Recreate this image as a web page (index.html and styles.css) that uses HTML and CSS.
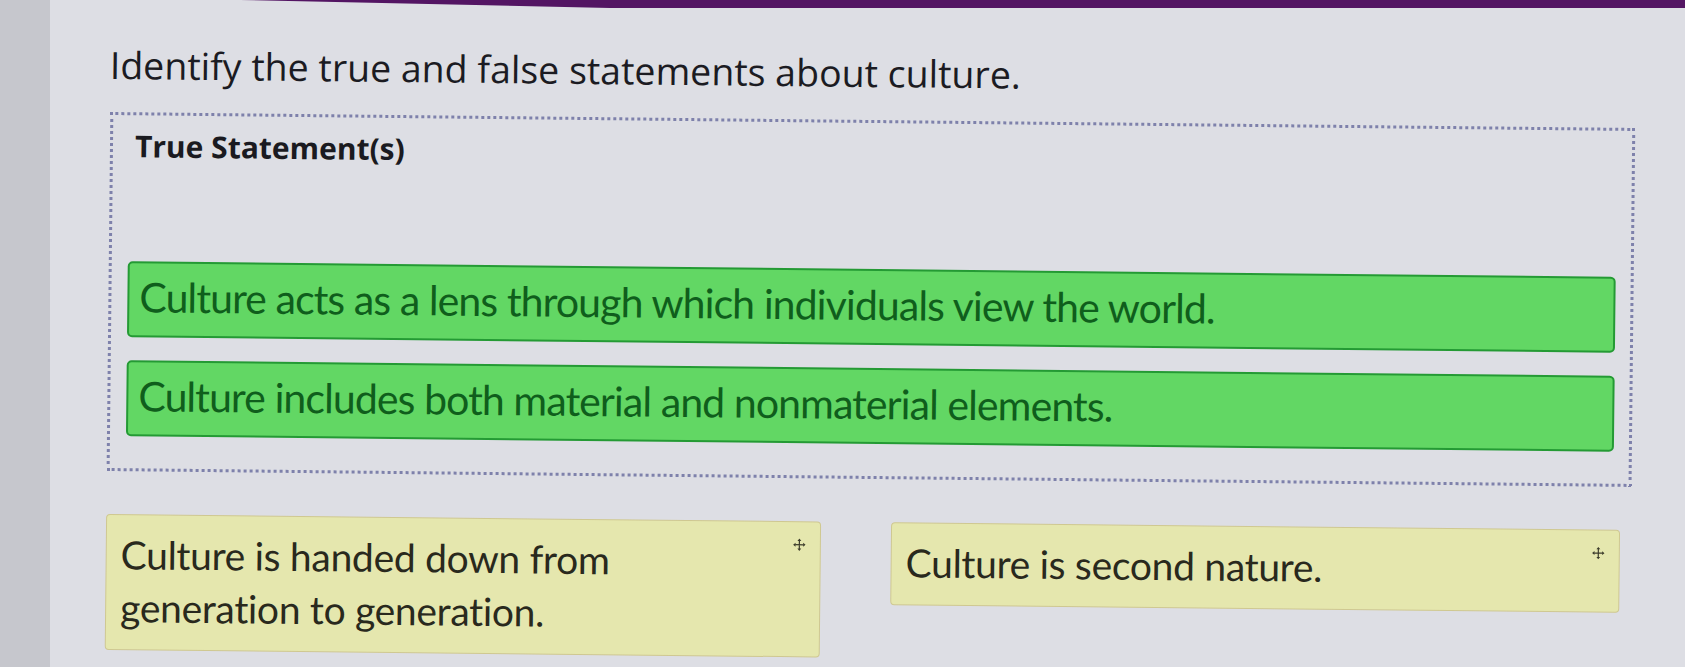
FILE: index.html
```html
<!DOCTYPE html>
<html lang="en">
<head>
<meta charset="utf-8">
<title>Culture statements</title>
<link rel="stylesheet" href="styles.css">
</head>
<body>
<div class="screen">
  <div class="rail"></div>
  <div class="main">
    <div class="topbar"></div>
    <div class="page">
      <h1 class="prompt">Identify the true and false statements about culture.</h1>
      <div class="zone">
        <div class="zone-title">True Statement(s)</div>
        <div class="zone-list">
          <div class="card">Culture acts as a lens through which individuals view the world.</div>
          <div class="card">Culture includes both material and nonmaterial elements.</div>
        </div>
      </div>
      <div class="bank">
        <div class="chip">
          <span class="chip-text">Culture is handed down from generation to generation.</span>
          <svg class="move" viewBox="0 0 14 14" aria-hidden="true">
            <path d="M7 2.5v9M2.5 7h9" stroke="#3d3d2c" stroke-width="1.3" fill="none"/>
            <path d="M7 0.3L4.9 2.9H9.1ZM7 13.7L4.9 11.1H9.1ZM0.3 7L2.9 4.9V9.1ZM13.7 7L11.1 4.9V9.1Z" fill="#3d3d2c"/>
          </svg>
        </div>
        <div class="chip">
          <span class="chip-text">Culture is second nature.</span>
          <svg class="move" viewBox="0 0 14 14" aria-hidden="true">
            <path d="M7 2.5v9M2.5 7h9" stroke="#3d3d2c" stroke-width="1.3" fill="none"/>
            <path d="M7 0.3L4.9 2.9H9.1ZM7 13.7L4.9 11.1H9.1ZM0.3 7L2.9 4.9V9.1ZM13.7 7L11.1 4.9V9.1Z" fill="#3d3d2c"/>
          </svg>
        </div>
      </div>
    </div>
  </div>
</div>
</body>
</html>
```

FILE: styles.css
```css
body {
  margin: 0;
  background: #dddee4;
  font-variant-ligatures: none;
}

.screen {
  display: flex;
  width: 1685px;
  height: 667px;
  overflow: hidden;
}

.rail {
  width: 50px;
  flex: none;
  background: #c6c7cd;
}

.main {
  flex: 1;
  display: flex;
  flex-direction: column;
  min-width: 0;
}

.topbar {
  height: 8px;
  flex: none;
  background: #531563;
  clip-path: polygon(190px 0, 100% 0, 100% 100%, 560px 100%);
}

.page {
  padding: 35px 49px 0 60px;
  transform: rotate(0.6deg);
  transform-origin: 60px 42px;
}

.prompt {
  margin: 0;
  font: 500 37.5px/44px "Open Sans", sans-serif;
  color: #1b1b22;
}

.zone {
  margin: 25px 0 0 1px;
  border: 3px dotted #7e81ab;
  padding: 13px 15px 32px 16px;
}

.zone-title {
  font: 700 30px/36px "Open Sans", sans-serif;
  color: #1a1a20;
  padding-left: 6px;
  margin-bottom: 97px;
}

.zone-list {
  display: flex;
  flex-direction: column;
  gap: 23px;
}

.card {
  background: #62d764;
  border: 2px solid #249a34;
  border-radius: 5px;
  padding: 9px 10px 13px;
  font: 400 41px/50px Lato, sans-serif;
  letter-spacing: -0.9px;
  color: #0f5e1c;
}

.bank {
  display: grid;
  grid-template-columns: 715px 729px;
  column-gap: 70px;
  align-items: start;
  margin: 43px 11px 0 1px;
}

.chip {
  display: flex;
  align-items: flex-start;
  background: #e5e7ae;
  border: 1px solid #cfc891;
  border-radius: 4px;
  padding: 13px 14px 15px 14px;
  font: 400 39px/53px Lato, sans-serif;
  letter-spacing: -0.3px;
  color: #29291d;
}

.chip-text {
  flex: 1;
}

.move {
  width: 13px;
  height: 13px;
  flex: none;
  margin-top: 3px;
}
```
